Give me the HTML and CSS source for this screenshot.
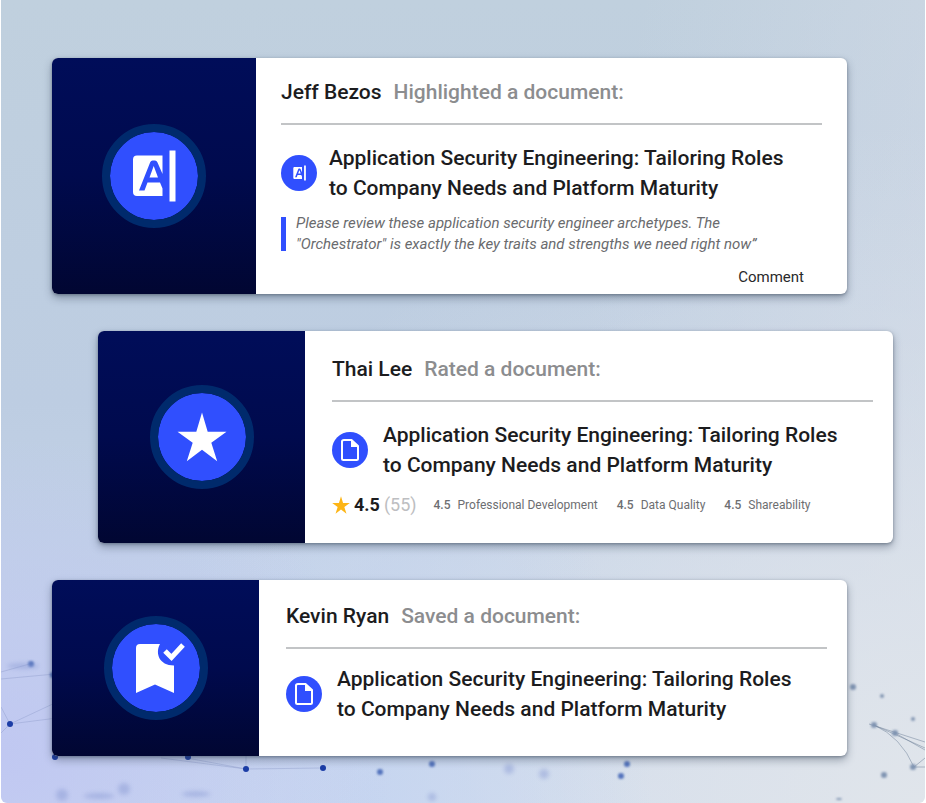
FILE: index.html
```
<!DOCTYPE html>
<html lang="en">
<head>
<meta charset="utf-8">
<meta name="viewport" content="width=device-width, initial-scale=1">
<title>Activity feed</title>
<link rel="stylesheet" href="styles.css">
</head>
<body>
<svg class="symbols" aria-hidden="true">
  <symbol id="highlight" viewBox="0 0 44 52">
    <path fill="currentColor" fill-rule="evenodd" d="M5 5.500H30.500V24L25.500 12.500Q24.600 10.500 23 10.500H20.500Q19 10.500 18.300 12L7 40.500H12.500L15.500 32.500H28L30.500 38.500V46H5Q1 46 1 42V9.500Q1 5.500 5 5.500ZM17.500 27.500 21.700 16 26 27.500Z"/>
    <path fill="currentColor" d="M37.500 0.500H43.500V51.500H37.500Z"/>
  </symbol>
  <symbol id="star" viewBox="0 0 50 50">
    <path fill="currentColor" d="M25 0.500 30.700 19.700H49.500L34.300 30.700 40.200 49.200 25 37.800 9.800 49.200 15.700 30.700 0.500 19.700H19.300Z"/>
  </symbol>
  <symbol id="saved" viewBox="-8 0 58 52">
    <path fill="currentColor" d="M5 2H25C20 11 24 23.500 39 23.500V51L20 42.500 1 51V6Q1 2 5 2Z"/>
    <path fill="none" stroke="currentColor" stroke-width="5" d="M30 9 36.500 15.500 48 3"/>
  </symbol>
  <symbol id="document" viewBox="0 0 18 22">
    <path fill="none" stroke="currentColor" stroke-width="2" stroke-linejoin="round" d="M3 1H10.500L17 7V19.500Q17 21 15.500 21H2.500Q1 21 1 19.500V2.500Q1 1 3 1Z"/>
    <path fill="currentColor" d="M10 1 17.500 8H10Z"/>
  </symbol>
</svg>
<main class="scene">
  <svg class="network" viewBox="0 0 924 803" preserveAspectRatio="xMidYMax slice" aria-hidden="true">
    <g class="network-lines">
      <path d="M0 672 32 663M0 679 54 674M9 724 56 702M9 724 56 718M0 707 9 724 0 733M160 758 245 769M186 758 245 769 245 756M245 769 322 768"/>
    </g>
    <g class="network-lines network-lines-gray">
      <path d="M868 724 924 742M873 725 924 748M873 725Q900 737 913 767M894 733 924 750M913 767 924 758M913 767H924"/>
    </g>
    <g class="dots-blue">
      <circle cx="9" cy="724" r="3"/><circle cx="54" cy="757" r="3"/><circle cx="187" cy="757" r="3"/>
      <circle cx="245" cy="769" r="3"/><circle cx="322" cy="768" r="3"/>
    </g>
    <g class="dots-hazy">
      <circle cx="30" cy="664" r="3"/><circle cx="52" cy="675" r="3"/><circle cx="379" cy="772" r="3"/>
      <circle cx="431" cy="764" r="3"/><circle cx="626" cy="764" r="3"/><circle cx="620" cy="776" r="3"/>
    </g>
    <g class="dots-faint">
      <ellipse cx="22" cy="666" rx="16" ry="3"/><circle cx="61" cy="795" r="6"/><circle cx="123" cy="789" r="6"/><ellipse cx="98" cy="796" rx="15" ry="3"/>
      <circle cx="508" cy="769" r="5"/><circle cx="543" cy="774" r="5"/><circle cx="431" cy="797" r="4"/><ellipse cx="195" cy="794" rx="14" ry="3"/>
    </g>
    <g class="dots-gray">
      <circle cx="873" cy="725" r="3"/><circle cx="894" cy="733" r="3"/><circle cx="912" cy="767" r="3"/>
      <circle cx="883" cy="775" r="3"/><circle cx="852" cy="687" r="3"/><circle cx="881" cy="696" r="2"/><circle cx="912" cy="719" r="2"/><ellipse cx="838" cy="799" rx="3" ry="1"/>
    </g>
  </svg>

  <div class="feed">
    <article class="card card-highlight">
      <div class="panel"><span class="badge"><svg class="icon-highlight"><use href="#highlight"/></svg></span></div>
      <div class="body">
        <header class="who"><strong>Jeff Bezos</strong><span>Highlighted a document:</span></header>
        <div class="doc">
          <span class="chip"><svg class="icon-small"><use href="#highlight"/></svg></span>
          <h2>Application Security Engineering: Tailoring Roles<br>to Company Needs and Platform Maturity</h2>
        </div>
        <blockquote>Please review these application security engineer archetypes. The<br>"Orchestrator" is exactly the key traits and strengths we need right now”</blockquote>
        <button class="comment" type="button">Comment</button>
      </div>
    </article>

    <article class="card card-rated">
      <div class="panel"><span class="badge"><svg class="icon-star"><use href="#star"/></svg></span></div>
      <div class="body">
        <header class="who"><strong>Thai Lee</strong><span>Rated a document:</span></header>
        <div class="doc">
          <span class="chip"><svg class="icon-document"><use href="#document"/></svg></span>
          <h2>Application Security Engineering: Tailoring Roles<br>to Company Needs and Platform Maturity</h2>
        </div>
        <div class="ratings">
          <div class="overall"><svg class="icon-rating"><use href="#star"/></svg><b>4.5</b><span>(55)</span></div>
          <div class="score"><b>4.5</b><span>Professional Development</span></div>
          <div class="score"><b>4.5</b><span>Data Quality</span></div>
          <div class="score"><b>4.5</b><span>Shareability</span></div>
        </div>
      </div>
    </article>

    <article class="card card-saved">
      <div class="panel"><span class="badge"><svg class="icon-saved"><use href="#saved"/></svg></span></div>
      <div class="body">
        <header class="who"><strong>Kevin Ryan</strong><span>Saved a document:</span></header>
        <div class="doc">
          <span class="chip"><svg class="icon-document"><use href="#document"/></svg></span>
          <h2>Application Security Engineering: Tailoring Roles<br>to Company Needs and Platform Maturity</h2>
        </div>
      </div>
    </article>
  </div>
</main>
</body>
</html>
```
FILE: styles.css
```
* { box-sizing: border-box; }
body {
  margin: 0;
  padding: 0 1px;
  background: #fff;
  color: #1c1c1e;
  font-family: Roboto, "Liberation Sans", sans-serif;
}
.symbols { position: absolute; width: 0; height: 0; }
.scene {
  position: relative;
  min-height: 100vh;
  overflow: hidden;
  border-radius: 0 0 6px 6px;
  background:
    radial-gradient(ellipse at 0% 94%, rgba(190, 196, 243, 0.8), transparent 30%),
    radial-gradient(ellipse at 40% 100%, rgba(196, 212, 241, 0.8), transparent 36%),
    radial-gradient(ellipse at 100% 100%, #e0e5eb, transparent 60%),
    linear-gradient(100deg, transparent 60%, rgba(215, 221, 232, 0.6)),
    linear-gradient(#c0d0de, #bdcde2 50%, #cad8ee);
}
.network { position: absolute; inset: 0; width: 100%; height: 100%; }
.network-lines { fill: none; stroke: #8391c4; stroke-width: 1; opacity: 0.35; }
.network-lines-gray { stroke: #6f8299; opacity: 0.5; }
.dots-blue { fill: #1c3da6; }
.dots-hazy { fill: #5474bd; filter: blur(1px); }
.dots-faint { fill: #8798d2; opacity: 0.45; filter: blur(2px); }
.dots-gray { fill: #8195b2; filter: blur(1px); }

.feed {
  position: relative;
  display: flex;
  flex-direction: column;
  gap: 37px;
  padding: 58px 32px 46px 51px;
}
.card {
  display: flex;
  margin-right: 46px;
  overflow: hidden;
  border-radius: 6px;
  background: #fff;
  box-shadow: 0 4px 8px rgba(45, 60, 80, 0.4), 0 1px 3px rgba(45, 60, 80, 0.4);
}
.card-rated { margin-right: 0; margin-left: 46px; }
.panel {
  display: grid;
  place-items: center;
  flex: 0 0 207px;
  background: linear-gradient(#000d59, #000a4d 50%, #010632);
  color: #fff;
}
.card-highlight .panel { flex-basis: 204px; }
.badge {
  display: grid;
  place-items: center;
  width: 104px;
  height: 104px;
  border: 8px solid #002a6c;
  border-radius: 50%;
  background: #304ffe;
  background-clip: padding-box;
}
.icon-highlight { width: 44px; height: 52px; }
.icon-star { width: 50px; height: 50px; }
.icon-saved { width: 58px; height: 52px; }
.icon-small { width: 13px; height: 16px; }
.icon-document { width: 18px; height: 22px; }
.icon-rating { width: 18px; height: 18px; color: #fdb515; }

.body {
  display: flex;
  flex-direction: column;
  flex: 1;
  min-width: 0;
  padding: 26px 20px 26px 27px;
}
.card-highlight .body { padding: 22px 25px 7px; }
.card-saved .body { padding-top: 24px; padding-bottom: 32px; }
.who {
  display: flex;
  flex-wrap: wrap;
  gap: 12px;
  padding-bottom: 19px;
  border-bottom: 2px solid #c2c4c6;
  font-size: 21px;
  line-height: 24px;
  font-weight: 500;
}
.who strong { font-weight: 500; }
.who span { color: #8c8d8f; }
.doc {
  display: flex;
  align-items: center;
  gap: 15px;
  margin-top: 18px;
}
.card-highlight .doc { gap: 12px; }
.card-saved .doc { margin-top: 15px; }
.chip {
  display: grid;
  place-items: center;
  flex: none;
  width: 36px;
  height: 36px;
  border-radius: 50%;
  background: #304ffe;
  color: #fff;
}
h2 {
  margin: 0;
  font-size: 21px;
  line-height: 30px;
  font-weight: 500;
}
blockquote {
  display: flex;
  align-items: center;
  gap: 10px;
  margin: 10px 0 0;
  color: #6a6b6e;
  font-size: 15px;
  line-height: 21px;
  font-style: italic;
}
blockquote::before {
  content: "";
  flex: none;
  width: 5px;
  height: 34px;
  background: #304ffe;
}
.comment {
  align-self: flex-end;
  margin: 12px 18px 0 0;
  padding: 0;
  border: 0;
  background: none;
  color: #29292b;
  font: 400 15px/20px Roboto, "Liberation Sans", sans-serif;
  cursor: pointer;
}
.ratings {
  display: flex;
  flex-wrap: wrap;
  align-items: center;
  gap: 17px;
  margin-top: 13px;
  line-height: 24px;
}
.overall { display: flex; align-items: center; gap: 4px; font-size: 18px; }
.overall b { font-weight: 700; }
.overall span { color: #bdbec1; }
.score { display: flex; gap: 7px; color: #6d6e71; font-size: 12px; }
.score + .score { margin-left: 2px; }
.score b { font-weight: 500; }
```
